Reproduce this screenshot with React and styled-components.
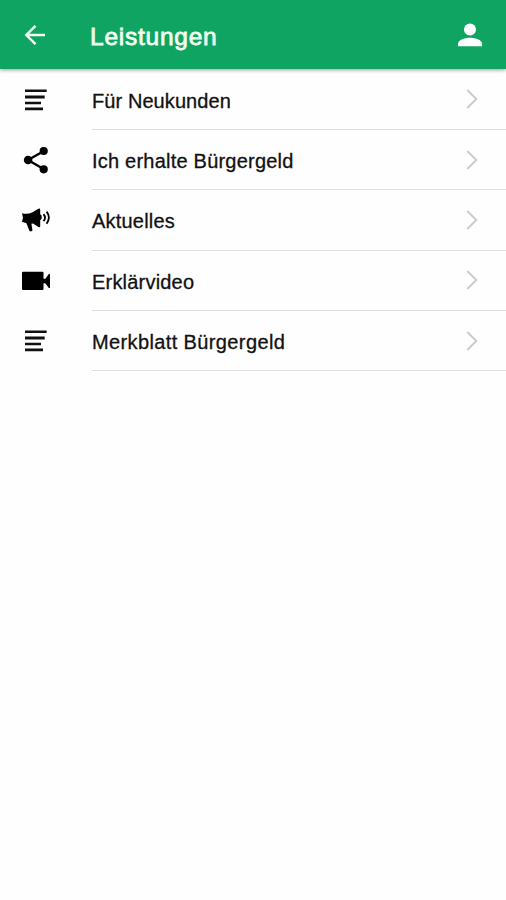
import styled, { createGlobalStyle } from "styled-components";

const App = () => {
  return (
    <Screen>
      <GlobalStyle />
      <Header>
        <BackButton type='button' aria-label='Zurück'>
          <BackIcon />
        </BackButton>
        <Title>Leistungen</Title>
        <ProfileButton type='button' aria-label='Profil'>
          <PersonIcon />
        </ProfileButton>
      </Header>
      <MenuList>
        {menuItems.map((item) => (
          <MenuItem key={item.id}>
            <IconWrapper>
              <item.Icon />
            </IconWrapper>
            <MenuContent>
              <Label $spacing={item.spacing}>{item.name}</Label>
              <ChevronIcon />
            </MenuContent>
          </MenuItem>
        ))}
      </MenuList>
    </Screen>
  );
};

export default App;

// Icons
const BackIcon = () => (
  <svg width='22' height='22' viewBox='0 0 22 22' fill='none' stroke='#f4fff4' strokeWidth='2.4'>
    <path d='M21 11H3M11.5 1.8 2.3 11l9.2 9.2' />
  </svg>
);

const PersonIcon = () => (
  <svg width='24' height='24' viewBox='0 0 24 24' fill='#fff'>
    <circle cx='12' cy='6.4' r='6' />
    <path d='M0 23.3v-2.6c0-4 7.4-6 12-6s12 2 12 6v2.6z' />
  </svg>
);

const TextIcon = () => (
  <svg width='28' height='24' viewBox='0 0 28 24' fill='#111'>
    <path d='M3 1.5h21.7v2.6H3zM3 7.6h19.7v2.9H3zM3 13.7h16v2.6H3zM3 19.5h18v2.7H3z' />
  </svg>
);

const ShareIcon = () => (
  <svg width='28' height='28' viewBox='0 0 28 28' fill='#000'>
    <path d='M22 5 6 14l16 9.3' fill='none' stroke='#000' strokeWidth='2.4' />
    <circle cx='21.7' cy='5' r='4.1' />
    <circle cx='6.1' cy='14' r='4.3' />
    <circle cx='21.7' cy='23.3' r='4.1' />
  </svg>
);

const MegaphoneIcon = () => (
  <svg width='28' height='24' viewBox='0 0 28 24' fill='#000'>
    <path d='M0 5.2q5.5 1.6 10.5-1L16.4.7q1.8-.8 1.8.8v4.8q1.6.4 1.6 3t-1.6 3v6q0 1.6-1.8.8l-5.3-3.6-1.7.3 1 6q.2 1.4-1.1 1.4H7.6L4.4 15.2 0 13.8l1-4z' />
    <path
      d='M21.5 6.2q3 3.4 0 7M24.6 3.6q4.6 5.8 0 12.2'
      fill='none'
      stroke='#000'
      strokeWidth='1.8'
    />
  </svg>
);

const VideoIcon = () => (
  <svg width='28' height='20' viewBox='0 0 28 20' fill='#000'>
    <path d='M1 .8h19.5q1 0 1 1v6h1.8L26.8 3H28v13.9h-1.2l-3.5-4.7h-1.8V18q0 1-1 1H1q-1 0-1-1V1.8q0-1 1-1z' />
  </svg>
);

const ChevronIcon = () => (
  <svg width='12' height='20' viewBox='0 0 12 20' fill='none' stroke='#cccccc' strokeWidth='2'>
    <path d='m1.3 1 9 9-9 9' />
  </svg>
);

const menuItems = [
  { id: 1, name: "Für Neukunden", spacing: 0.08, Icon: TextIcon },
  { id: 2, name: "Ich erhalte Bürgergeld", spacing: 0.22, Icon: ShareIcon },
  { id: 3, name: "Aktuelles", spacing: 0.2, Icon: MegaphoneIcon },
  { id: 4, name: "Erklärvideo", spacing: 0.2, Icon: VideoIcon },
  { id: 5, name: "Merkblatt Bürgergeld", spacing: 0.38, Icon: TextIcon },
];

const GlobalStyle = createGlobalStyle`
  * {
    box-sizing: border-box;
  }
  body {
    margin: 0;
    background: #fff;
    font-family: "Liberation Sans", Arial, sans-serif;
  }
`;

const Screen = styled.div`
  min-height: 100vh;
  background: #fefefe;
`;

const Header = styled.header`
  display: flex;
  align-items: center;
  height: 69px;
  padding: 3px 24px 0;
  background: #10a462;
  box-shadow: 0 1px 4px rgba(0, 0, 0, 0.4);
`;

const IconButton = styled.button`
  display: flex;
  padding: 0;
  border: 0;
  background: none;
`;

const BackButton = styled(IconButton)`
  width: 66px;
  margin-bottom: 2px;
`;

const ProfileButton = styled(IconButton)`
  margin-left: auto;
  margin-bottom: 2px;
`;

const Title = styled.h1`
  margin: 0;
  padding-top: 2px;
  font-size: 24.5px;
  font-weight: normal;
  letter-spacing: 0.75px;
  line-height: 30px;
  color: #f0fff0;
  -webkit-text-stroke: 0.8px #f0fff0;
`;

const MenuList = styled.ul`
  margin: 0;
  padding: 0.5px 0 0;
  list-style: none;
`;

const MenuItem = styled.li`
  display: flex;
  height: 60.4px;
  padding-left: 22px;
`;

const IconWrapper = styled.span`
  display: flex;
  align-items: center;
  width: 70px;
`;

const MenuContent = styled.div`
  display: flex;
  flex: 1;
  align-items: center;
  justify-content: space-between;
  padding-right: 28px;
  border-bottom: 1px solid #dedede;
`;

const Label = styled.span`
  padding-top: 3px;
  font-size: 20px;
  letter-spacing: ${({ $spacing }) => $spacing}px;
  line-height: 24px;
  color: #111;
  -webkit-text-stroke: 0.3px #111;
`;
